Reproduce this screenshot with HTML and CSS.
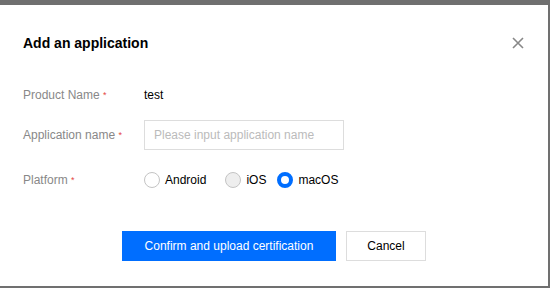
FILE: index.html
```html
<!DOCTYPE html>
<html lang="en">
<head>
    <meta charset="UTF-8">
    <title>Add an application</title>
    <link rel="stylesheet" href="styles.css">
</head>
<body>
    <div class="dialog">
        <div class="dialog-header">
            <h3>Add an application</h3>
            <span class="close-btn">
                <svg width="12" height="12" viewBox="0 0 12 12"><path d="M1 1L11 11M11 1L1 11" stroke="#888" stroke-width="1.6"/></svg>
            </span>
        </div>

        <div class="form">
            <div class="form-row">
                <label class="form-label">Product Name <em>*</em></label>
                <div class="form-field text-value">test</div>
            </div>
            <div class="form-row row-input">
                <label class="form-label" for="appName">Application name <em>*</em></label>
                <div class="form-field">
                    <input type="text" id="appName" placeholder="Please input application name">
                </div>
            </div>
            <div class="form-row row-radio">
                <label class="form-label">Platform <em>*</em></label>
                <div class="form-field radio-group">
                    <span class="radio"><i class="dot"></i>Android</span>
                    <span class="radio disabled"><i class="dot"></i>iOS</span>
                    <span class="radio checked"><i class="dot"></i>macOS</span>
                </div>
            </div>
        </div>

        <div class="dialog-footer">
            <button class="btn btn-primary">Confirm and upload certification</button>
            <button class="btn">Cancel</button>
        </div>
    </div>
</body>
</html>
```

FILE: styles.css
```css
* { margin: 0; padding: 0; box-sizing: border-box; font-family: 'Liberation Sans', Arial, sans-serif; }
body { background: #707070; }

.dialog {
    width: 548px;
    height: 281px;
    margin-top: 5px;
    background: white;
}

.dialog-header {
    display: flex;
    justify-content: space-between;
    align-items: center;
    padding: 28px 24px 0 23px;
    height: 48px;
}

.dialog-header h3 {
    font-size: 14px;
    font-weight: bold;
    color: #000;
    line-height: 20px;
}

.close-btn { display: flex; }

.form { padding: 27px 23px 0 23px; }

.form-row {
    display: flex;
    align-items: center;
    height: 30px;
    font-size: 12px;
}

.row-input { margin-top: 10px; }
.row-radio { margin-top: 15px; }

.form-label {
    width: 121px;
    color: #888;
}

.form-label em {
    color: #e54545;
    font-style: normal;
    font-size: 9px;
    vertical-align: 1px;
}

.text-value { color: #000; }

input {
    width: 200px;
    height: 30px;
    padding: 0 9px;
    border: 1px solid #ddd;
    font-size: 12px;
    color: #000;
    outline: none;
}

input::placeholder { color: #bbb; }

.radio-group {
    display: flex;
    align-items: center;
    color: #000;
}

.radio {
    display: flex;
    align-items: center;
    gap: 5px;
    margin-right: 19px;
}

.radio.disabled { margin-right: 11px; }

.dot {
    width: 16px;
    height: 16px;
    border: 1px solid #c4c4c4;
    border-radius: 50%;
    background: white;
}

.radio.disabled .dot { background: #eee; }

.radio.checked .dot { border: 4px solid #006eff; }

.dialog-footer {
    display: flex;
    justify-content: center;
    gap: 10px;
    margin-top: 36px;
}

.btn {
    height: 30px;
    min-width: 80px;
    padding: 0 20px;
    border: 1px solid #ddd;
    background: white;
    color: #000;
    font-size: 12px;
    cursor: pointer;
}

.btn-primary {
    width: 214px;
    background: #006eff;
    border-color: #006eff;
    color: white;
}
```
